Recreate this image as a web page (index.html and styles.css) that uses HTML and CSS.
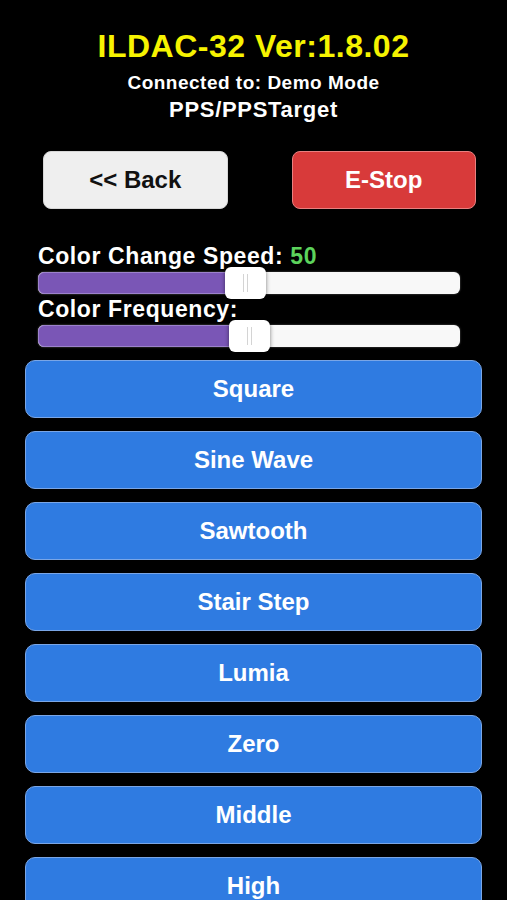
FILE: index.html
```html
<!DOCTYPE html>
<html lang="en">

<head>
    <meta charset="UTF-8">
    <meta name="viewport" content="width=device-width, initial-scale=1.0">
    <title>ILDAC-32 Color</title>
    <link rel="stylesheet" href="styles.css">
</head>

<body>
    <!-- Header -->
    <div class="header">
        <h1 class="title">ILDAC-32 Ver:1.8.02</h1>
        <div class="connected">Connected to: Demo Mode</div>
        <div class="page-name">PPS/PPSTarget</div>
    </div>

    <!-- Top buttons -->
    <div class="top-buttons">
        <button class="btn-back">&lt;&lt; Back</button>
        <button class="btn-stop">E-Stop</button>
    </div>

    <!-- Sliders -->
    <div class="sliders">
        <div class="slider-label">Color Change Speed: <span class="value">50</span></div>
        <div class="track">
            <div class="fill" style="width: 49%"></div>
            <div class="thumb" style="left: calc(49% - 20px)"><span class="grip"></span></div>
        </div>
        <div class="slider-label">Color Frequency:</div>
        <div class="track">
            <div class="fill" style="width: 50%"></div>
            <div class="thumb" style="left: calc(50% - 20px)"><span class="grip"></span></div>
        </div>
    </div>

    <!-- Wave buttons -->
    <div class="wave-list">
        <button class="wave">Square</button>
        <button class="wave">Sine Wave</button>
        <button class="wave">Sawtooth</button>
        <button class="wave">Stair Step</button>
        <button class="wave">Lumia</button>
        <button class="wave">Zero</button>
        <button class="wave">Middle</button>
        <button class="wave">High</button>
    </div>
</body>

</html>
```
FILE: styles.css
```css
body {
    font-family: "Liberation Sans", Arial, sans-serif;
    font-weight: bold;
    background-color: #000;
    color: #fff;
    margin: 0;
    padding: 0;
}

.header {
    text-align: center;
    padding-top: 28px;
}

.title {
    margin: 0;
    font-size: 32px;
    line-height: 36px;
    letter-spacing: 0.5px;
    color: #f6f300;
}

.connected {
    margin-top: 7px;
    font-size: 19px;
    line-height: 24px;
    letter-spacing: 0.5px;
}

.page-name {
    margin-top: 2px;
    font-size: 22px;
    line-height: 26px;
    letter-spacing: 0.7px;
}

.top-buttons {
    display: flex;
    gap: 64px;
    padding: 0 31px 0 43px;
    margin-top: 28px;
}

.top-buttons button {
    flex: 1;
    height: 58px;
    border-radius: 8px;
    font-family: inherit;
    font-weight: bold;
    font-size: 24px;
    cursor: pointer;
}

.btn-back {
    background: #efefef;
    color: #111;
    border: 1px solid #d6d6d6;
}

.btn-stop {
    background: #d83a3a;
    color: #fff;
    border: 1px solid #e98080;
}

.sliders {
    padding: 0 47px 0 38px;
    margin-top: 34px;
}

.slider-label {
    font-size: 23px;
    line-height: 26px;
    letter-spacing: 0.6px;
}

.slider-label + .track {
    margin-top: 3px;
}

.track + .slider-label {
    margin-top: 2px;
}

.value {
    color: #5cd35c;
}

.track {
    position: relative;
    height: 22px;
    background: #f8f8f8;
    border-radius: 6px;
    box-shadow: 0 0 2px rgba(255, 255, 255, 0.4);
}

.fill {
    height: 100%;
    background: #7a56b6;
    border-radius: 6px 0 0 6px;
    box-sizing: border-box;
    border: 1px solid #9c82cc;
}

.thumb {
    position: absolute;
    top: -5px;
    width: 41px;
    height: 32px;
    background: #fff;
    border-radius: 6px;
    box-shadow: 0 1px 4px rgba(0, 0, 0, 0.5);
    display: flex;
    align-items: center;
    justify-content: center;
}

.grip {
    width: 3px;
    height: 18px;
    border-left: 1px solid #d4d4d4;
    border-right: 1px solid #d4d4d4;
}

.wave-list {
    display: flex;
    flex-direction: column;
    gap: 13px;
    padding: 0 25px;
    margin-top: 13px;
}

.wave {
    height: 58px;
    background: #2f7be1;
    color: #fff;
    border: 1px solid #7aa6e6;
    border-radius: 10px;
    font-family: inherit;
    font-weight: bold;
    font-size: 24px;
    cursor: pointer;
}
```
